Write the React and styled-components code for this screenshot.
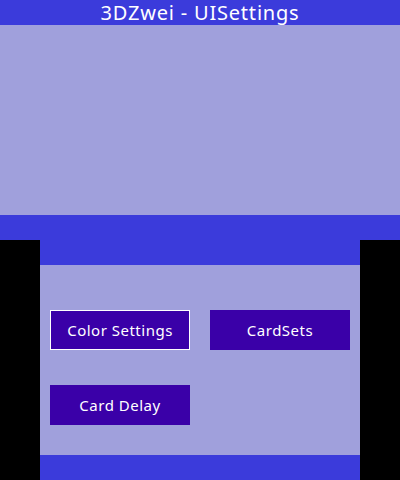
import React from 'react';
import styled, { createGlobalStyle } from 'styled-components';

const GlobalStyle = createGlobalStyle`
  html, body {
    margin: 0;
    padding: 0;
    background: #000;
  }
  body {
    font-family: 'Noto Sans', 'DejaVu Sans', sans-serif;
  }
`;

const Device = styled.div`
  width: 400px;
  height: 480px;
  display: flex;
  flex-direction: column;
  align-items: center;
  background: #000;
`;

const Screen = styled.div`
  width: ${props => props.w}px;
  height: 240px;
  display: flex;
  flex-direction: column;
  background: #a0a0dc;
`;

const Bar = styled.div`
  height: 25px;
  flex-shrink: 0;
  background: #3b3bdb;
  color: #fff;
  display: flex;
  justify-content: center;
  align-items: center;
  font-size: 20px;
  letter-spacing: 0.8px;
  line-height: 1;
`;

const Body = styled.div`
  flex: 1;
`;

const Menu = styled.div`
  flex: 1;
  display: grid;
  grid-template-columns: 140px 140px;
  grid-auto-rows: 40px;
  column-gap: 20px;
  row-gap: 35px;
  padding: 45px 10px 0;
`;

const MenuButton = styled.button`
  background: #3a00a8;
  color: #fff;
  border: 1px solid ${props => (props.selected ? '#fff' : '#3a00a8')};
  padding: 0;
  margin: 0;
  font-family: 'Noto Sans', 'DejaVu Sans', sans-serif;
  font-size: 15px;
  letter-spacing: 0.5px;
  cursor: pointer;
`;

const buttons = ['Color Settings', 'CardSets', 'Card Delay'];

export default function App() {
  return (
    <>
      <GlobalStyle />
      <Device>
        <Screen w={400}>
          <Bar>3DZwei - UISettings</Bar>
          <Body />
          <Bar />
        </Screen>
        <Screen w={320}>
          <Bar />
          <Menu>
            {buttons.map((label, i) => (
              <MenuButton key={label} selected={i === 0}>
                {label}
              </MenuButton>
            ))}
          </Menu>
          <Bar />
        </Screen>
      </Device>
    </>
  );
}
